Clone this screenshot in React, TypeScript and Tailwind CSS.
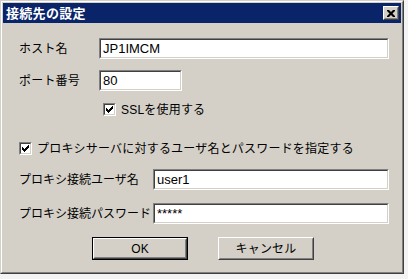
import React from 'react';

const jp = { fontFamily: '"Liberation Sans", "Noto Sans CJK JP", sans-serif' };

const Edit: React.FC<{ value: string; className: string }> = ({ value, className }) => (
  <div className={`shrink-0 border border-t-[#808080] border-l-[#808080] border-b-white border-r-white ${className}`}>
    <div className="h-full border border-t-[#404040] border-l-[#404040] border-b-[#d4d0c8] border-r-[#d4d0c8] bg-white pl-[2px] flex items-center text-[13px] text-black leading-none tracking-normal">
      {value}
    </div>
  </div>
);

const Check: React.FC = () => (
  <div className="w-[13px] h-[13px] border border-t-[#808080] border-l-[#808080] border-b-white border-r-white shrink-0">
    <div className="w-full h-full border border-t-[#404040] border-l-[#404040] border-b-[#d4d0c8] border-r-[#d4d0c8] bg-white flex items-center justify-center">
      <svg width="7" height="7" viewBox="0 0 7 7">
        <path d="M0 2h1v1h1v1h1v-1h1v-1h1v-1h1v-1h1v3h-1v1h-1v1h-1v1h-1v1h-1v-1h-1v-1h-1z" fill="#000" />
      </svg>
    </div>
  </div>
);

const Btn: React.FC<{ label: string; isDefault?: boolean }> = ({ label, isDefault }) => (
  <div className={`w-[96px] h-[23px] ${isDefault ? 'border border-black' : ''}`}>
    <div className="h-full border border-t-white border-l-white border-b-[#404040] border-r-[#404040]">
      <div className="h-full border border-t-[#d4d0c8] border-l-[#d4d0c8] border-b-[#808080] border-r-[#808080] flex items-center justify-center text-[12px] text-black">
        {label}
      </div>
    </div>
  </div>
);

export default function App() {
  return (
    <div className="w-[408px] h-[279px] bg-[#f3f3f3]" style={jp}>
      <div className="w-[404px] h-[274px] border border-t-[#d4d0c8] border-l-[#d4d0c8] border-b-[#404040] border-r-[#404040]">
        <div className="h-full border border-t-white border-l-white border-b-[#808080] border-r-[#808080] bg-[#d4d0c8] p-px flex flex-col">
          {/* caption */}
          <div className="h-[20px] bg-[#0a246a] flex items-center justify-between pl-[3px] pr-[2px]">
            <span className="text-white text-[13px] font-bold leading-none tracking-[0.3px]">接続先の設定</span>
            <div className="w-[16px] h-[14px] border border-t-white border-l-white border-b-[#404040] border-r-[#404040]">
              <div className="h-full border border-t-[#d4d0c8] border-l-[#d4d0c8] border-b-[#808080] border-r-[#808080] bg-[#d4d0c8] flex items-center justify-center">
                <svg width="8" height="7" viewBox="0 0 8 7">
                  <path d="M0 0h2l2 2 2-2h2v1l-2.5 2.5L8 6v1H6L4 5 2 7H0V6l2.5-2.5L0 1z" fill="#000" />
                </svg>
              </div>
            </div>
          </div>

          <div className="flex flex-col pl-[16px] text-[12px] text-black tracking-[0.2px] whitespace-nowrap">
            <div className="flex items-center h-[21px] mt-[15px]">
              <span className="w-[80px]">ホスト名</span>
              <Edit value="JP1IMCM" className="w-[290px] h-[21px]" />
            </div>
            <div className="flex items-center h-[21px] mt-[11px]">
              <span className="w-[80px]">ポート番号</span>
              <Edit value="80" className="w-[83px] h-[21px]" />
            </div>
            <div className="flex items-center h-[13px] mt-[12px] pl-[84px] gap-[5px]">
              <Check />
              <span>SSLを使用する</span>
            </div>
            <div className="flex items-center h-[13px] mt-[26px] gap-[5px]">
              <Check />
              <span>プロキシサーバに対するユーザ名とパスワードを指定する</span>
            </div>
            <div className="flex items-center h-[21px] mt-[14px]">
              <span className="w-[134px] tracking-normal">プロキシ接続ユーザ名</span>
              <Edit value="user1" className="w-[236px] h-[21px]" />
            </div>
            <div className="flex items-center h-[21px] mt-[13px]">
              <span className="w-[134px] tracking-normal">プロキシ接続パスワード</span>
              <Edit value="*****" className="w-[236px] h-[21px]" />
            </div>
            <div className="flex h-[23px] mt-[13px] pl-[73px] gap-[30px]">
              <Btn label="OK" isDefault />
              <Btn label="キャンセル" />
            </div>
          </div>
        </div>
      </div>
    </div>
  );
}
